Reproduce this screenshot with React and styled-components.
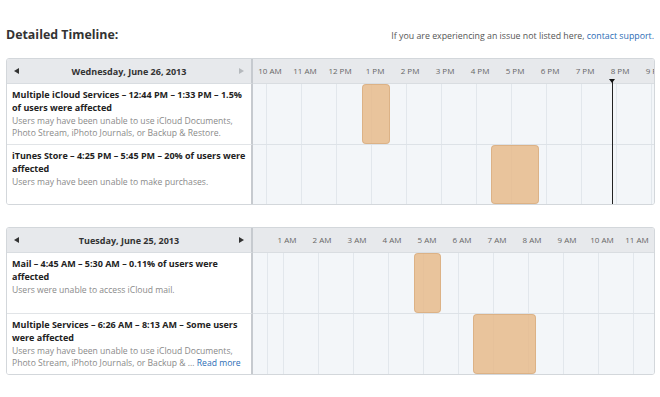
import React from "react";
import styled, { createGlobalStyle } from "styled-components";

const HOUR = 35;
const LEFT_COL = 248;

const GlobalStyle = createGlobalStyle`
  body {
    margin: 0;
    background: #fff;
    font-family: "Open Sans", "Noto Sans", sans-serif;
    color: #222;
  }
`;

const Page = styled.div`
  padding: 26px 5px 0 6px;
`;

const TopBar = styled.div`
  display: flex;
  justify-content: space-between;
  align-items: baseline;
`;

const Title = styled.h2`
  margin: 0;
  font-size: 12.4px;
  line-height: 18px;
  font-weight: 700;
  color: #333;
`;

const Notice = styled.p`
  margin: 0;
  font-size: 8.8px;
  color: #555;
  padding-right: 1px;
`;

const Link = styled.a`
  color: #2b6cb5;
  text-decoration: none;
`;

const Panel = styled.div`
  position: relative;
  display: grid;
  grid-template-columns: 246px 1fr;
  margin-top: ${(p) => p.$gap}px;
  border: 1px solid #d3d7db;
  border-radius: 3px;
  overflow: hidden;
`;

const DayHeader = styled.div`
  height: 24px;
  display: flex;
  align-items: center;
  justify-content: space-between;
  padding: 0 7px 0 7px;
  background: #e7e9ec;
  border-bottom: 1px solid #d9dde1;
  border-right: 2px solid #c6cacf;
`;

const DayLabel = styled.span`
  font-size: 9px;
  font-weight: 700;
  color: #333;
`;

const Arrow = styled.span`
  width: 0;
  height: 0;
  border-top: 3px solid transparent;
  border-bottom: 3px solid transparent;
  ${(p) =>
    p.$dir === "left"
      ? `border-right: 5px solid ${p.$disabled ? "#b5b9bd" : "#333"};`
      : `border-left: 5px solid ${p.$disabled ? "#b5b9bd" : "#333"};`}
`;

const HourHeader = styled.div`
  position: relative;
  height: 24px;
  background: #e7e9ec;
  border-bottom: 1px solid #d9dde1;
`;

const HourLabel = styled.span`
  position: absolute;
  top: 0;
  line-height: 24px;
  font-size: 8px;
  color: #666;
  white-space: nowrap;
  transform: translateX(-50%);
`;

const IssueCell = styled.div`
  height: ${(p) => p.$height}px;
  box-sizing: border-box;
  padding: 4px 3px 0 5px;
  background: #fff;
  border-right: 2px solid #c6cacf;
  border-top: ${(p) => (p.$first ? "none" : "1px solid #e1e4e7")};
`;

const IssueTitle = styled.div`
  font-size: 9px;
  line-height: 13px;
  font-weight: 700;
  color: #222;
`;

const IssueDesc = styled.div`
  margin-top: 1px;
  font-size: 8.6px;
  line-height: 12px;
  color: #8a8a8a;
`;

const Lane = styled.div`
  position: relative;
  height: ${(p) => p.$height}px;
  box-sizing: border-box;
  background-color: #f3f6f9;
  background-image: repeating-linear-gradient(
    to right,
    #e2e7ec 0 1px,
    transparent 1px ${HOUR}px
  );
  border-top: ${(p) => (p.$first ? "none" : "1px solid #dde2e7")};
`;

const Outage = styled.div`
  position: absolute;
  top: 0;
  bottom: 0;
  box-sizing: border-box;
  background: rgba(230, 184, 136, 0.82);
  border: 1px solid rgba(214, 170, 124, 0.7);
  border-radius: 4px;
`;

const NowLine = styled.div`
  position: absolute;
  top: 20px;
  bottom: 0;
  width: 1px;
  background: #222;
  z-index: 2;
  &::before {
    content: "";
    position: absolute;
    top: 0;
    left: -3px;
    border-left: 3.5px solid transparent;
    border-right: 3.5px solid transparent;
    border-top: 4px solid #111;
  }
`;

const days = [
  {
    date: "Wednesday, June 26, 2013",
    nextDisabled: true,
    firstHour: 10,
    offset: 13,
    gap: 14,
    hours: ["10 AM", "11 AM", "12 PM", "1 PM", "2 PM", "3 PM", "4 PM", "5 PM", "6 PM", "7 PM", "8 PM", "9 PM"],
    now: 19.83,
    issues: [
      {
        title: "Multiple iCloud Services – 12:44 PM – 1:33 PM – 1.5% of users were affected",
        desc: "Users may have been unable to use iCloud Documents, Photo Stream, iPhoto Journals, or Backup & Restore.",
        start: 12.733,
        end: 13.55,
        height: 60,
      },
      {
        title: "iTunes Store – 4:25 PM – 5:45 PM – 20% of users were affected",
        desc: "Users may have been unable to make purchases.",
        start: 16.417,
        end: 17.8,
        height: 60,
      },
    ],
  },
  {
    date: "Tuesday, June 25, 2013",
    nextDisabled: false,
    firstHour: 1,
    offset: 30,
    gap: 22,
    hours: ["1 AM", "2 AM", "3 AM", "4 AM", "5 AM", "6 AM", "7 AM", "8 AM", "9 AM", "10 AM", "11 AM"],
    issues: [
      {
        title: "Mail – 4:45 AM – 5:30 AM – 0.11% of users were affected",
        desc: "Users were unable to access iCloud mail.",
        start: 4.75,
        end: 5.5,
        height: 60,
      },
      {
        title: "Multiple Services – 6:26 AM – 8:13 AM – Some users were affected",
        desc: "Users may have been unable to use iCloud Documents, Photo Stream, iPhoto Journals, or Backup & ...",
        readMore: true,
        start: 6.433,
        end: 8.217,
        height: 61,
      },
    ],
  },
];

const DayPanel = ({ day }) => {
  const toX = (h) => day.offset + (h - day.firstHour) * HOUR;
  const gridShift = ((day.offset % HOUR) + HOUR) % HOUR;
  return (
    <Panel $gap={day.gap}>
      <DayHeader>
        <Arrow $dir="left" />
        <DayLabel>{day.date}</DayLabel>
        <Arrow $dir="right" $disabled={day.nextDisabled} />
      </DayHeader>
      <HourHeader>
        {day.hours.map((h, i) => (
          <HourLabel key={h} style={{ left: toX(day.firstHour + i) + 4 }}>
            {h}
          </HourLabel>
        ))}
      </HourHeader>
      {day.issues.map((issue, i) => (
        <React.Fragment key={issue.title}>
          <IssueCell $first={i === 0} $height={issue.height}>
            <IssueTitle>{issue.title}</IssueTitle>
            <IssueDesc>
              {issue.desc}
              {issue.readMore && <Link href="#"> Read more</Link>}
            </IssueDesc>
          </IssueCell>
          <Lane $first={i === 0} $height={issue.height} style={{ backgroundPositionX: gridShift }}>
            <Outage style={{ left: toX(issue.start), width: toX(issue.end) - toX(issue.start) }} />
          </Lane>
        </React.Fragment>
      ))}
      {day.now && <NowLine style={{ left: LEFT_COL + toX(day.now) }} />}
    </Panel>
  );
};

export default function App() {
  return (
    <>
      <GlobalStyle />
      <Page>
        <TopBar>
          <Title>Detailed Timeline:</Title>
          <Notice>
            If you are experiencing an issue not listed here, <Link href="#">contact support.</Link>
          </Notice>
        </TopBar>
        {days.map((d) => (
          <DayPanel key={d.date} day={d} />
        ))}
      </Page>
    </>
  );
}
